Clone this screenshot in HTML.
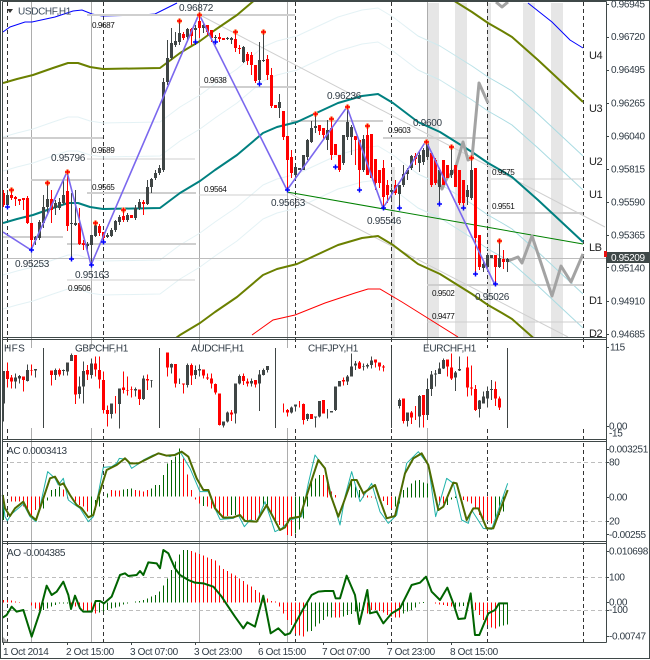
<!DOCTYPE html>
<html><head><meta charset="utf-8"><title>USDCHF,H1</title>
<style>
html,body{margin:0;padding:0;background:#fff;width:650px;height:660px;overflow:hidden}
svg{display:block}
text{font-family:"Liberation Sans",sans-serif;font-size:10px;letter-spacing:-.35px;fill:#2f3a44}
.b{font-size:10px;letter-spacing:-.3px}
.s{font-size:8.2px;letter-spacing:-.45px;fill:#111}
.l{font-size:11px;letter-spacing:-.5px;fill:#222}
.n{fill:none}
</style></head><body>
<svg width="650" height="660" viewBox="0 0 650 660" xmlns="http://www.w3.org/2000/svg">
<defs>
<clipPath id="c"><rect x="3" y="2" width="603" height="335"/></clipPath>
<linearGradient id="pale" gradientUnits="userSpaceOnUse" x1="400" y1="0" x2="500" y2="0"><stop offset="0" stop-color="#e4f2f5"/><stop offset="1" stop-color="#a9dbe2"/></linearGradient>
<path id="t" fill="none" stroke-linejoin="round" d="M3 223L17 219 33 215 53 208 68 203 78 203 90 207 103 209 160 208 180 193 200 181 215 170 237 155 263 133 277 127 297 122 325 109 338 103 362 96 378 94 393 103 418 122 440 132 472 152 488 163 502 171 512 177 538 200 583 242"/>
<g id="r" fill="none"><path d="M-2.5 0H2.5M0-2.5V2.5" stroke="#ffb060" stroke-width="3"/><path d="M-2.5 0H2.5M0-2.5V2.5" stroke="#f00" stroke-width="1.4"/></g>
<path id="u" d="M-2.5 0H2.5M0-2.5V2.5" stroke="#00f" stroke-width="1.5" fill="none"/>
</defs>
<rect width="650" height="660" fill="#fff"/>
<!-- stripes -->
<g fill="#e6e6e6"><rect x="427" y="3" width="12" height="334"/><rect x="455" y="3" width="12" height="334"/><rect x="487" y="3" width="4" height="334"/><rect x="523" y="3" width="12" height="334"/><rect x="551" y="3" width="12" height="334"/><rect x="391" y="167" width="4" height="170"/></g>
<!-- vertical grid -->
<path d="M31.5 2V642M91.5 2V642M199.5 2V642M287.5 2V642M427.5 2V642" stroke="#adadad"/>
<path d="M7.5 2V642M103.5 2V642M295.5 2V642M391.5 2V642M487.5 2V642M583.5 2V642" stroke="#333" stroke-dasharray="4 3"/>
<g clip-path="url(#c)">
<!-- channels -->
<g stroke="url(#pale)" stroke-width="1"><use href="#t" y="-86"/><use href="#t" y="-52"/><use href="#t" y="52"/><use href="#t" y="86"/></g>
<g stroke="#00f" stroke-width="1"><path d="M3 32L10 27 25 22 32 22 55 17 73 11 82 10 92 14 102 16 143 15 155 14 167 8 177 3" fill="none"/><path d="M528 3L552 22 570 40 583 48" fill="none"/></g>
<!-- grey levels -->
<path d="M87 15H295M199 87H295M3 138H103M3 237H63M67 244H196M87 193H196M291 121H383M383 138H487M491 213H583M427 285H583M31 180H91" stroke="#cfcfcf" stroke-width="2"/>
<path d="M87 159H195M199 195H287M67 280H195M491 179H583M427 322H583" stroke="#cfcfcf"/>
<path d="M3 258.5H606" stroke="#bdbdbd"/>
<path d="M200 15L605 227M287 192L568 337" stroke="#cfcfcf" fill="none"/>
<path d="M287 192L583 244" stroke="#008000" fill="none"/>
<use href="#t" y="-140" stroke="#6b8000" stroke-width="2"/>
<use href="#t" y="142" stroke="#6b8000" stroke-width="2"/>
<use href="#t" stroke="#008080" stroke-width="2"/>
<path d="M252 335L273 320 295 315 325 303 355 293 368 289 380 289 402 302 458 337" stroke="#f00" fill="none"/>
<!-- forecast -->
<path d="M437 180L442 189 447 178 455 170 463 142 468 160 472 158 479 83 488 103M496 2L502 7 508 2M508 261L518 257 522 263 532 236 552 296 561 266 571 282 583 254" stroke="#a3a3a3" stroke-width="3" fill="none" stroke-linejoin="round"/>
<!-- candles -->
<g transform="translate(.5 0)" shape-rendering="crispEdges" fill="none">
<path stroke="#f00" d="M3 190V207M11 190V200M15 196V206M19 199V205M23 198V210M27 196V224M31 223V250M51 190V223M67 173V231M79 208V245M83 240V250M99 224V236M103 232V242M123 210V222M131 215V218M143 200V215M183 32V40M191 28V45M199 15V38M207 25V35M211 30V42M219 33V42M223 38V40M235 31V52M239 45V54M247 52V65M251 52V75M255 65V83M267 55V80M271 68V108M275 105V108M283 111V140M287 136V190M291 150V178M319 125V135M323 128V140M331 120V160M335 144V155M339 155V172M355 136V165M359 140V190M367 126V175M371 134V178M375 159V190M379 170V188M383 160V207M387 180V203M395 180V195M415 153V165M431 153V187M435 158V185M443 160V185M447 165V178M455 165V187M459 170V205M463 180V207M475 168V274M479 235V270M495 255V285M503 250V269"/>
<path stroke="#3f4545" d="M7 190V207M35 236V245M39 220V240M43 195V228M47 183V213M55 200V215M59 198V210M63 180V205M71 193V258M75 190V226M87 242V250M91 235V265M95 223V237M107 233V238M111 228V237M115 220V232M119 215V225M127 213V222M135 205V220M139 199V210M147 180V205M151 178V193M155 170V180M159 165V175M163 78V172M167 40V85M171 28V60M175 32V47M179 21V45M187 28V42M195 25V45M203 22V33M215 35V42M227 37V40M231 37V44M243 46V63M259 42V84M263 32V62M279 94V118M295 167V177M299 168V170M303 155V170M307 139V160M311 121V143M315 114V133M327 120V150M343 135V165M347 107V140M351 125V155M363 135V172M391 188V200M399 185V208M403 165V187M407 168V180M411 155V170M419 152V172M423 148V165M427 142V160M439 168V204M451 147V178M467 185V205M471 157V200M483 260V272M487 253V272M491 255V258M499 241V268M507 258V272"/>
<path stroke="#f00" stroke-width="3" d="M3 193V205M11 195V198M15 197V199M19 199V201M23 198V200M27 198V223M31 223V240M51 199V210M67 191V226M79 223V244M83 243V245M99 226V233M103 232V238M123 216V220M131 215V218M143 202V204M183 34V38M191 29V36M199 21V28M207 25V32M211 30V38M219 37V39M223 38V40M235 39V48M239 48V49M247 54V61M251 55V65M255 65V81M267 59V75M271 75V106M275 105V108M283 111V137M287 136V160M291 157V173M319 125V131M323 128V135M331 128V155M335 144V155M339 155V170M355 136V140M359 140V170M367 135V175M371 134V178M375 159V183M379 170V183M383 168V197M387 185V195M395 185V193M415 156V159M431 153V185M435 160V183M443 160V185M447 165V178M455 165V187M459 170V203M463 180V203M475 168V238M479 235V267M495 255V267M503 259V262"/>
<path stroke="#3f4545" stroke-width="3" d="M7 195V205M35 237V240M39 222V238M43 207V223M47 199V207M55 203V208M59 202V208M63 195V203M71 223V224M75 223V225M87 244V246M91 235V245M95 224V236M107 235V237M111 230V236M115 221V230M119 217V222M127 215V220M135 208V218M139 202V208M147 187V204M151 179V187M155 173V178M159 168V173M163 82V170M167 58V82M171 43V58M175 41V45M179 33V42M187 29V37M195 28V30M203 25V28M215 37V38M227 38V39M231 38V40M243 47V62M259 60V80M263 60V61M279 102V108M295 167V175M299 168V170M303 155V170M307 140V157M311 128V142M315 126V128M327 130V140M343 135V163M347 122V137M351 127V137M363 139V170M391 190V192M399 185V194M403 174V185M407 170V174M411 156V168M419 155V163M423 150V162M427 142V157M439 170V187M451 170V175M467 190V197M471 170V198M483 264V268M487 255V267M491 255V258M499 258V267M507 259V262"/>
</g>
<!-- zigzag -->
<path d="M3 232L31 250 67 172 91 265 199 14 287 190 347 107 383 208 426 141 495 285" stroke="#7b68ee" stroke-width="1.6" fill="none" stroke-linejoin="round"/>
<!-- fractal marks -->
<use href="#r" x="179.5" y="21"/><use href="#r" x="199.5" y="15"/><use href="#r" x="235.5" y="32"/><use href="#r" x="263.5" y="32"/><use href="#r" x="315.5" y="114"/><use href="#r" x="11.5" y="190"/><use href="#r" x="47.5" y="183"/><use href="#r" x="67.5" y="172"/><use href="#r" x="95.5" y="223"/><use href="#r" x="123.5" y="210"/><use href="#r" x="331.5" y="119"/><use href="#r" x="347.5" y="107"/><use href="#r" x="367.5" y="126"/><use href="#r" x="426.5" y="142"/><use href="#r" x="451.5" y="147"/><use href="#r" x="471.5" y="158"/><use href="#r" x="499.5" y="241"/>
<use href="#u" x="195.5" y="42"/><use href="#u" x="215.5" y="42"/><use href="#u" x="259.5" y="84"/><use href="#u" x="7.5" y="207"/><use href="#u" x="31.5" y="250"/><use href="#u" x="71.5" y="259"/><use href="#u" x="91.5" y="265"/><use href="#u" x="103.5" y="242"/><use href="#u" x="287.5" y="190"/><use href="#u" x="335.5" y="167"/><use href="#u" x="359.5" y="190"/><use href="#u" x="383.5" y="208"/><use href="#u" x="399.5" y="208"/><use href="#u" x="439.5" y="204"/><use href="#u" x="463.5" y="208"/><use href="#u" x="475.5" y="274"/><use href="#u" x="495.5" y="284"/>
</g>
<!-- main labels -->
<path d="M7 9H13L10 13Z" fill="#333"/>
<text x="18" y="14.5" style="fill:#3a4a5a">USDCHF,H1</text>
<g class="f">
<text x="179" y="11" class="b">0.96872</text><text x="51" y="161" class="b">0.95796</text><text x="15" y="267" class="b">0.95253</text><text x="75" y="278" class="b">0.95163</text><text x="271" y="206" class="b">0.95663</text><text x="367" y="224" class="b">0.95546</text><text x="475" y="300" class="b">0.95026</text><text x="327" y="99" class="b">0.96236</text><text x="413" y="126" class="b">0.9600</text>
<text x="92" y="28" class="s">0.9687</text><text x="204" y="83" class="s">0.9638</text><text x="92" y="153" class="s">0.9589</text><text x="92" y="190" class="s">0.9565</text><text x="204" y="192" class="s">0.9564</text><text x="68" y="291" class="s">0.9506</text><text x="388" y="133" class="s">0.9603</text><text x="492" y="175" class="s">0.9575</text><text x="492" y="209" class="s">0.9551</text><text x="432" y="296" class="s">0.9502</text><text x="432" y="319" class="s">0.9477</text>
<text x="589" y="59" class="l">U4</text><text x="589" y="112" class="l">U3</text><text x="589" y="165" class="l">U2</text><text x="589" y="198" class="l">U1</text><text x="589" y="251" class="l">LB</text><text x="589" y="304" class="l">D1</text><text x="589" y="337" class="l">D2</text>
</g>
<!-- AC -->
<path d="M3 462.5H606M3 521.5H606M3 577.5H606M3 610.5H606" stroke="#bdbdbd" stroke-dasharray="4 3"/>
<g transform="translate(.1667 440) scale(.33333)" stroke-width="3" fill="none" shape-rendering="crispEdges">
<path stroke="#f00" d="M34 170V185M46 170V185M58 170V185M70 170V200M82 170V205M94 170V225M106 170V210M118 170V205M190 148V170M202 170V175M226 170V185M238 170V195M250 170V200M262 170V215M334 150V170M346 152V170M358 152V170M406 150V170M418 152V170M430 155V170M442 150V170M550 55V170M562 103V170M574 150V170M586 172V178M598 170V190M622 170V200M634 170V205M646 170V210M658 170V225M670 170V230M682 170V228M718 170V230M730 170V240M742 170V240M754 170V240M766 170V240M778 170V232M814 170V225M826 170V240M838 170V255M850 170V265M862 170V285M874 170V288M970 105V170"/>
<path stroke="#006400" d="M10 165V240M130 170V205M142 172V182M154 150V170M166 147V170M178 140V170M274 170V230M286 180V210M298 170V200M322 160V172M370 148V170M382 147V170M394 145V170M454 145V170M466 135V170M478 135V170M490 105V170M502 70V170M514 60V170M526 50V170M538 25V170M610 170V198M694 170V225M706 170V225M790 170V200M802 170V195M886 170V280M898 170V268M910 170V235M922 170V200M934 125V170M946 115V170M958 105V170"/>
</g>
<g transform="translate(325.1667 440) scale(.33333)" stroke-width="3" fill="none" shape-rendering="crispEdges">
<path stroke="#f00" d="M7 130V172M19 155V172M31 165V172M115 160V172M127 167V172M139 170V172M151 170V175M163 170V178M175 170V183M187 170V195M199 170V205M331 170V175M343 170V195M355 170V190M415 170V180M427 170V185M439 170V190M451 170V205M463 170V225M475 170V240M487 170V240M499 170V250"/>
<path stroke="#006400" d="M79 120V172M91 140V172M103 150V172M211 170V200M223 170V190M235 150V172M247 143V172M259 130V172M271 122V172M283 120V172M295 127V172M307 130V172M367 170V195M379 172V178M391 170V174M511 170V250M523 170V225M535 170V215"/>
</g>
<g transform="translate(0 440) scale(.33333)" fill="none" stroke-linejoin="round">
<path stroke="#20b2aa" stroke-width="3" d="M8 175L15 230 22 242 35 222 70 192 90 230 108 245 120 200 143 95 165 115 175 135 190 115 205 180 225 195 240 205 265 245 280 230 295 160 310 82 335 80 350 70 358 55 380 58 395 85 415 72 430 60 460 45 480 40 510 50 540 35 570 85 600 155 625 155 640 195 660 238 700 235 715 225 733 260 750 240 770 245 795 185 825 275 845 265 870 240 905 230 925 130 945 45 975 85 995 170 1020 255 1035 170 1055 95 1080 185 1115 130 1140 215 1165 250 1190 225 1220 70 1255 35 1285 75 1307 230 1340 115 1360 130 1385 240 1405 250 1415 210 1450 265 1475 268 1523 130"/>
<path stroke="#4d6b00" stroke-width="6" d="M8 165L15 205 30 228 45 205 70 185 90 225 108 240 125 190 150 115 165 110 180 135 190 130 210 165 230 195 245 205 265 232 280 225 295 170 320 90 350 75 375 55 390 70 415 70 435 60 475 40 500 47 525 45 545 35 565 50 590 115 610 150 625 150 645 205 670 233 700 232 720 225 735 243 770 245 800 195 840 270 855 262 870 235 900 230 935 120 955 60 975 85 990 160 1015 230 1030 190 1055 120 1070 120 1090 160 1125 135 1140 180 1160 235 1185 228 1215 100 1240 55 1265 40 1285 75 1315 210 1330 200 1360 128 1370 130 1400 240 1420 205 1435 205 1460 265 1480 265 1523 150"/>
</g>
<!-- AO -->
<g transform="translate(.1667 545) scale(.33333)" stroke-width="3" fill="none" shape-rendering="crispEdges">
<path stroke="#f00" d="M10 165V172M22 165V172M34 167V172M46 170V172M58 171V172M94 172V182M106 172V190M118 172V195M214 172V190M226 172V185M238 172V190M250 172V195M262 172V198M274 172V198M286 172V205M574 18V172M586 22V172M598 27V172M610 32V172M622 37V172M634 42V172M646 47V172M658 62V172M670 72V172M682 78V172M694 85V172M706 92V172M718 100V172M730 108V172M742 118V172M754 125V172M766 135V172M778 143V172M790 150V172M802 160V172M814 168V172M826 170V172M838 172V185M850 172V205M862 172V225M874 172V240M886 172V265M898 172V272M910 172V275"/>
<path stroke="#006400" d="M130 172V195M142 172V190M154 172V185M166 172V180M178 172V176M190 172V175M202 172V175M298 172V202M310 172V200M322 172V195M334 172V190M346 172V188M358 172V185M370 172V178M382 172V175M406 170V172M418 168V172M430 165V172M442 160V172M454 155V172M466 150V172M478 140V172M490 122V172M502 100V172M514 75V172M526 50V172M538 28V172M550 15V172M562 15V172M922 172V260M934 172V258M946 172V245M958 172V235M970 172V225"/>
</g>
<g transform="translate(325.1667 545) scale(.33333)" stroke-width="3" fill="none" shape-rendering="crispEdges">
<path stroke="#f00" d="M31 172V218M43 172V218M127 172V205M139 172V195M151 172V195M163 172V198M175 172V203M187 172V210M199 172V215M211 172V218M223 172V218M331 172V176M343 172V178M355 172V180M367 172V183M379 172V185M427 172V188M439 172V190M451 172V195M463 172V210M475 172V225M487 172V240M499 172V248M511 172V250"/>
<path stroke="#006400" d="M7 172V215M19 172V218M55 172V215M67 172V210M79 172V207M91 172V200M103 172V200M115 172V195M235 172V205M247 172V200M259 172V195M271 172V188M283 172V176M295 171V174M391 172V188M403 172V185M415 172V183M523 172V245M535 172V242M547 172V238"/>
</g>
<g transform="translate(0 545) scale(.33333)" fill="none" stroke-linejoin="round">
<path stroke="#006400" stroke-width="6" d="M8 218L20 210 35 185 50 200 70 195 95 275 120 200 140 122 155 150 170 140 190 110 205 150 213 192 225 152 240 190 250 200 275 200 287 168 300 168 312 175 335 155 360 90 375 85 385 93 410 90 420 78 430 90 445 52 470 55 480 70 490 15 505 25 525 70 540 90 565 105 585 113 610 115 640 125 665 155 680 178 705 215 730 250 742 232 765 245 790 152 812 265 835 250 855 270 870 265 905 200 935 150 955 140 975 138 1000 138 1007 160 1020 160 1040 92 1065 150 1078 237 1102 135 1110 205 1130 200 1150 235 1175 205 1200 190 1235 120 1260 113 1278 95 1295 140 1320 165 1342 128 1360 175 1375 222 1395 220 1412 145 1425 270 1438 270 1465 205 1485 195 1497 175 1523 175"/>
</g>
<!-- HFS pane -->
<rect x="3" y="348" width="603" height="80" fill="#fff"/>
<path d="M43.5 348V428M159.5 348V428M275.5 348V428M391.5 348V428M507.5 348V428" stroke="#3f4545"/>
<g transform="translate(.1667 335) scale(.33333)" fill="none" shape-rendering="crispEdges">
<path stroke="#f00" stroke-width="3" d="M22 82V158M34 120V160M70 125V170M94 88V122M154 107V152M178 100V125M226 60V207M262 90V135M286 65V125M298 65V160M310 110V235M322 212V275M346 183V235M370 110V175M382 125V182M394 155V188M418 163V210M442 118V165M502 52V125M526 87V158M550 145V175M574 85V150M610 103V130M622 115V135M634 115V160M646 145V178M658 175V272M694 225V258M730 115V150M742 130V155M766 135V158M850 205V232M862 222V245M898 198V218M910 205V268M934 237V252M970 195V235"/>
<path stroke="#3f4545" stroke-width="3" d="M10 108V260M46 115V160M58 120V145M82 88V140M106 102V128M166 100V135M190 103V122M202 82V122M214 55V78M238 125V190M250 80V205M274 70V130M334 205V250M358 160V280M406 158V185M430 122V195M454 135V158M514 85V115M538 130V147M562 85V158M586 92V132M598 88V125M670 260V278M682 230V262M706 145V265M718 118V148M754 130V155M778 105V228M790 100V122M802 93V112M874 215V235M886 208V230M922 235V258M946 245V278M958 198V248"/>
<path stroke="#f00" stroke-width="9" d="M22 108V132M34 128V140M70 125V135M94 105V107M154 107V120M178 105V118M226 60V178M262 105V118M286 85V103M298 105V133M310 135V225M322 225V237M370 158V165M382 165V167M394 163V165M418 163V192M442 132V137M502 52V98M526 87V145M550 145V148M574 90V122M610 103V122M622 128V130M634 130V145M646 147V173M658 175V270M694 232V238M730 123V138M742 140V146M766 135V148M862 225V233M910 207V255M934 237V252M970 195V235"/>
<path stroke="#3f4545" stroke-width="9" d="M10 108V205M46 128V140M58 123V130M82 105V138M106 102V107M166 105V120M190 105V108M202 82V110M214 60V78M238 155V177M250 108V155M274 85V120M334 205V237M358 160V207M406 162V167M430 130V192M454 135V137M514 87V98M562 90V150M586 105V120M598 102V107M670 260V272M682 232V260M706 145V235M718 123V145M754 138V146M778 118V146M790 105V120M802 93V105M874 218V233M886 208V215M922 237V252M946 245V247M958 198V245"/>
</g>
<g transform="translate(325.1667 335) scale(.33333)" fill="none" shape-rendering="crispEdges">
<path stroke="#f00" stroke-width="3" d="M55 128V152M103 78V102M151 73V97M163 83V107M175 90V110M235 190V265M259 228V267M271 213V255M295 180V278M367 73V125M379 55V135M427 65V185M439 92V182M451 150V228M511 140V213M523 185V225"/>
<path stroke="#3f4545" stroke-width="3" d="M7 222V250M19 228V233M31 155V228M43 138V155M67 120V150M79 55V125M91 78V105M115 85V107M127 85V100M139 65V100M223 190V220M247 233V275M283 180V278M307 130V255M319 108V183M331 105V155M343 82V117M355 70V102M391 108V168M403 65V108M463 195V248M475 170V205M487 155V218M499 135V195"/>
<path stroke="#f00" stroke-width="9" d="M55 135V140M103 83V100M151 73V83M163 83V95M175 95V97M235 190V258M259 233V248M295 180V240M367 73V95M379 97V130M427 98V158M439 158V160M451 162V225M511 162V190M523 190V218"/>
<path stroke="#3f4545" stroke-width="9" d="M19 228V233M31 155V225M43 138V155M67 125V140M79 95V125M91 85V92M115 93V95M127 90V95M139 77V90M223 195V213M247 233V258M283 183V245M307 162V240M319 118V162M331 115V118M343 100V117M355 75V100M391 112V128M403 102V107M463 197V222M475 185V205M487 168V190M499 162V165"/>
</g>
<!-- frames -->
<path d="M2.5 1.5H606.5M2.5 337.5H606.5M2.5 339.5H606.5M2.5 439.5H606.5M2.5 441.5H606.5M2.5 541.5H606.5M2.5 543.5H606.5M2.5 642.5H606.5M2.5 1.5V642.5M606.5 1.5V642.5" stroke="#3f4848" fill="none"/>
<path d="M.5 .5H649.5V658.5H.5Z" stroke="#3f4848" fill="none"/>
<path d="M606 4.5h3M606 37.5h3M606 70.5h3M606 103.5h3M606 136.5h3M606 169.5h3M606 202.5h3M606 235.5h3M606 267.5h3M606 301.5h3M606 334.5h3M606 347.5h3M606 426.5h3M606 449.5h3M606 462.5h3M606 497.5h3M606 521.5h3M606 534.5h3M606 551.5h3M606 577.5h3M606 602.5h3M606 610.5h3M606 636.5h3M3.5 642v3M67.5 642v3M131.5 642v3M195.5 642v3M259.5 642v3M323.5 642v3M387.5 642v3M451.5 642v3" stroke="#3f4848"/>
<path d="M3 642V637L8 642Z" fill="#aaa"/>
<!-- axis labels -->
<text x="611" y="7.5">0.96945</text><text x="611" y="40">0.96720</text><text x="611" y="73">0.96495</text><text x="611" y="106.5">0.96265</text><text x="611" y="139.5">0.96040</text><text x="611" y="172.5">0.95815</text><text x="611" y="205.5">0.95590</text><text x="611" y="238.5">0.95365</text><text x="611" y="271.5">0.95140</text><text x="611" y="304.5">0.94910</text><text x="611" y="337.5">0.94685</text>
<rect x="607" y="252" width="43" height="11" fill="#3f4848"/>
<rect x="604" y="251" width="3" height="6" fill="#e81010"/>
<text x="611" y="261" style="fill:#fff">0.95209</text>
<text x="4" y="351.5" style="letter-spacing:.4px">HFS</text><text x="75" y="351.5">GBPCHF,H1</text><text x="191" y="351.5">AUDCHF,H1</text><text x="308" y="351.5">CHFJPY,H1</text><text x="423" y="351.5">EURCHF,H1</text>
<text x="610" y="350.5">115</text><text x="609" y="429.5">0.00</text><text x="609" y="436.5">-15</text>
<text x="7" y="454">AC 0.0003413</text>
<text x="609" y="452.5">0.003251</text><text x="609" y="465.5">80</text><text x="609" y="500.5">0.00</text><text x="609" y="524.5">20</text><text x="609" y="538">-0.00255</text>
<text x="7" y="556">AO -0.004385</text>
<text x="609" y="554.5">0.010698</text><text x="609" y="580.5">100</text><text x="609" y="605.5">0.00</text><text x="609" y="613">-100</text><text x="609" y="639.5">-0.00747</text>
<text x="3" y="655">1 Oct 2014</text><text x="66" y="655">2 Oct 15:00</text><text x="130" y="655">3 Oct 07:00</text><text x="194" y="655">3 Oct 23:00</text><text x="258" y="655">6 Oct 15:00</text><text x="322" y="655">7 Oct 07:00</text><text x="387" y="655">7 Oct 23:00</text><text x="450" y="655">8 Oct 15:00</text>
</svg>
</body></html>
